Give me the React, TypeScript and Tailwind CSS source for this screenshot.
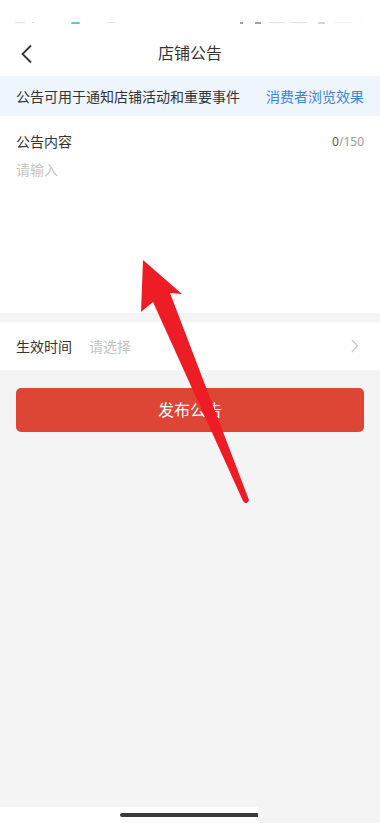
import React from 'react';

const font = { fontFamily: '"Noto Sans", "Noto Sans CJK SC", sans-serif' };

function StatusBar() {
  return (
    <div className="relative h-[30px] bg-white">
      <div className="absolute left-[15px] top-[22px] h-[1px] w-[10px] bg-gray-200" />
      <div className="absolute left-[32px] top-[22px] h-[1px] w-[2px] bg-gray-300" />
      <div className="absolute left-[71px] top-[22px] h-[2px] w-[9px] rounded bg-[#5cc4ff]" />
      <div className="absolute left-[107px] top-[22px] h-[1px] w-[8px] bg-[#cfeaff]" />
      <div className="absolute left-[240px] top-[22px] h-[2px] w-[3px] bg-gray-400" />
      <div className="absolute left-[255px] top-[22px] h-[2px] w-[6px] bg-gray-400" />
      <div className="absolute left-[269px] top-[22px] h-[1px] w-[16px] bg-gray-200" />
      <div className="absolute left-[290px] top-[22px] h-[1px] w-[17px] bg-gray-200" />
      <div className="absolute left-[318px] top-[22px] h-[2px] w-[7px] bg-gray-300" />
      <div className="absolute left-[334px] top-[22px] h-[1px] w-[18px] bg-gray-100" />
      <div className="absolute left-[361px] top-[22px] h-[1px] w-[1px] bg-gray-200" />
    </div>
  );
}

function Arrow() {
  return (
    <svg className="pointer-events-none absolute left-0 top-0" width="380" height="823" viewBox="0 0 380 823">
      <path
        d="M143 260 L182 294 L170 293 L249 500 Q247 506 243 501 L153 302 L141 312 Z"
        fill="#ee1c25"
      />
    </svg>
  );
}

export default function App() {
  return (
    <div className="relative flex h-[823px] w-[380px] flex-col overflow-hidden bg-[#f4f4f4]" style={font}>
      <StatusBar />

      {/* 头部 */}
      <div className="relative flex h-[46px] items-center justify-center bg-white">
        <svg className="absolute left-[20px] top-[14px]" width="14" height="20" viewBox="0 0 14 20">
          <path d="M11 1.5 L2.5 10 L11 18.5" fill="none" stroke="#333" strokeWidth="1.8" />
        </svg>
        <span className="text-[16px] text-[#333]">店铺公告</span>
      </div>

      {/* 提示 */}
      <div className="flex h-[40px] items-center justify-between bg-[#eef5fc] px-4 text-[14px]">
        <span className="text-[#333]">公告可用于通知店铺活动和重要事件</span>
        <span className="text-[#3b86d6]">消费者浏览效果</span>
      </div>

      {/* 内容 */}
      <div className="h-[197px] bg-white px-4 pt-[15px]">
        <div className="flex items-center justify-between">
          <span className="text-[14px] text-[#333]">公告内容</span>
          <span className="text-[12px] text-[#999]">
            <span className="text-[#555]">0</span>/150
          </span>
        </div>
        <div className="mt-[7px] text-[14px] text-[#c4c4c4]">请输入</div>
      </div>

      <div className="h-[9px]" />

      {/* 生效时间 */}
      <div className="flex h-[48px] items-center bg-white px-4 text-[14px]">
        <span className="text-[#333]">生效时间</span>
        <span className="ml-[17px] text-[#c4c4c4]">请选择</span>
        <svg className="ml-auto mr-[5px]" width="8" height="14" viewBox="0 0 8 14">
          <path d="M1 1 L6.5 7 L1 13" fill="none" stroke="#c8c8c8" strokeWidth="1.2" />
        </svg>
      </div>

      <div className="px-4 pt-[18px]">
        <button className="flex h-[44px] w-full items-center justify-center rounded-[5px] bg-[#dd4535] text-[16px] text-white">
          发布公告
        </button>
      </div>

      <div className="flex-1" />

      {/* 底部 */}
      <div className="flex h-[16px]">
        <div className="relative h-full w-[258px] bg-white">
          <div className="absolute left-[120px] top-[6px] h-[4px] w-[138px] rounded-l-full bg-[#3a3a3a]" />
        </div>
      </div>

      <Arrow />
    </div>
  );
}
